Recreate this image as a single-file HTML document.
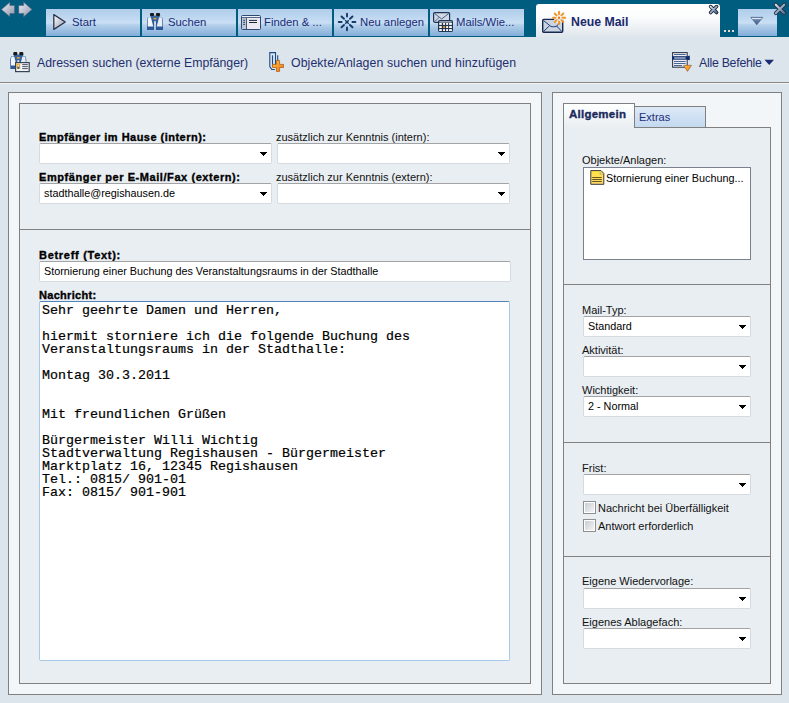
<!DOCTYPE html>
<html><head><meta charset="utf-8">
<style>
*{margin:0;padding:0;box-sizing:border-box}
html,body{width:789px;height:703px;overflow:hidden;background:#dce5ec;font-family:"Liberation Sans",sans-serif;position:relative}
.a{position:absolute}
.t{position:absolute;white-space:nowrap;line-height:13px}
#hdr{left:0;top:0;width:789px;height:37px;background:#005d80}
.tab{position:absolute;top:9px;height:27px;width:94px;background:linear-gradient(#b0cdea 0,#c9dff4 52%,#b6d1eb 58%,#82add9 100%)}
.tab .t{font-size:11.3px;color:#1c2a78;top:6.7px}
.tool{font-size:12.3px;color:#1f2f6e}
.box{position:absolute;border:1px solid #808080}
.lbl{font-size:11px;color:#111}
.blbl{font-size:11px;font-weight:bold;color:#000;letter-spacing:0.4px;-webkit-text-stroke-width:0.35px}
.fld{position:absolute;height:21px;background:#fff;border:1px solid #d6dbe1;border-top:1px solid #a3a3a3;border-radius:2px}
.arr{position:absolute;width:7px;height:4px}.arr i{display:block;height:1px;background:#000;margin:0 auto;width:7px}.arr i+i{width:5px}.arr i+i+i{width:3px}.arr i+i+i+i{width:1px}
.ftxt{font-size:10.8px;color:#000}
.mono{font-family:"Liberation Mono",monospace;font-size:13.33px;line-height:13px;color:#000;white-space:pre;-webkit-text-stroke-width:0.2px}
</style></head><body>
<!-- header -->
<div id="hdr" class="a"></div>

<!-- tabs -->
<div class="tab" style="left:46px"><div class="t" style="left:26px">Start</div></div>
<div class="tab" style="left:142px"><div class="t" style="left:26px">Suchen</div></div>
<div class="tab" style="left:238px"><div class="t" style="left:26px">Finden &amp; ...</div></div>
<div class="tab" style="left:334px"><div class="t" style="left:26px">Neu anlegen</div></div>
<div class="tab" style="left:430px"><div class="t" style="left:26px">Mails/Wie...</div></div>

<!-- active tab -->
<div class="a" style="left:536px;top:4px;width:184px;height:33px;background:linear-gradient(#ffffff 0,#fbfcfd 40%,#dfe6ec 100%);border-radius:3px 3px 0 0"></div>
<div class="t" style="left:571px;top:16.2px;font-size:12.3px;font-weight:bold;color:#1a2a6c">Neue Mail</div>

<!-- dropdown btn -->
<div class="a" style="left:738px;top:9px;width:39px;height:27px;background:linear-gradient(#b0cdea 0,#c9dff4 52%,#b6d1eb 58%,#82add9 100%)"></div>

<!-- toolbar -->
<div class="t tool" style="left:37px;top:57.2px">Adressen suchen (externe Empfänger)</div>
<div class="t tool" style="left:291px;top:57.2px;letter-spacing:0.1px">Objekte/Anlagen suchen und hinzufügen</div>
<div class="t tool" style="left:699px;top:57.2px;letter-spacing:-0.25px">Alle Befehle</div>
<div class="a" style="left:0;top:82px;width:789px;height:1px;background:#888"></div>
<div class="a" style="left:0;top:83px;width:789px;height:1px;background:#f0f4f7"></div>

<!-- left panel -->
<div class="box" style="left:8px;top:92px;width:534px;height:603px;background:#f2f6f9"></div>
<div class="box" style="left:19px;top:103px;width:512px;height:581px;background:#e9eef2"></div>
<div class="a" style="left:19px;top:229px;width:512px;height:1px;background:#808080"></div>

<!-- right panel -->
<div class="box" style="left:552px;top:92px;width:230px;height:603px;background:#f2f6f9"></div>
<div class="box" style="left:563px;top:127px;width:208px;height:557px;background:#e9eef2"></div>
<div class="a" style="left:563px;top:284px;width:208px;height:1px;background:#808080"></div>
<div class="a" style="left:563px;top:442px;width:208px;height:1px;background:#808080"></div>
<div class="a" style="left:563px;top:556px;width:208px;height:1px;background:#808080"></div>


<!-- left form -->
<div class="t blbl" style="left:39px;top:130.7px;letter-spacing:0.48px">Empfänger im Hause (intern):</div>
<div class="t lbl" style="left:276px;top:130.7px">zusätzlich zur Kenntnis (intern):</div>
<div class="fld" style="left:39px;top:143px;width:233px"></div>
<div class="arr" style="left:260px;top:152px"><i></i><i></i><i></i><i></i></div>
<div class="fld" style="left:277px;top:143px;width:233px"></div>
<div class="arr" style="left:498px;top:152px"><i></i><i></i><i></i><i></i></div>
<div class="t blbl" style="left:39px;top:170.7px;letter-spacing:0.57px">Empfänger per E-Mail/Fax (extern):</div>
<div class="t lbl" style="left:276px;top:170.7px">zusätzlich zur Kenntnis (extern):</div>
<div class="fld" style="left:39px;top:183px;width:233px"></div>
<div class="arr" style="left:260px;top:192px"><i></i><i></i><i></i><i></i></div>
<div class="t ftxt" style="left:44px;top:186.8px">stadthalle@regishausen.de</div>
<div class="fld" style="left:277px;top:183px;width:233px"></div>
<div class="arr" style="left:498px;top:192px"><i></i><i></i><i></i><i></i></div>

<div class="t blbl" style="left:39px;top:248.7px;letter-spacing:0.71px">Betreff (Text):</div>
<div class="fld" style="left:39px;top:261px;width:472px"></div>
<div class="t ftxt" style="left:44px;top:264.8px">Stornierung einer Buchung des Veranstaltungsraums in der Stadthalle</div>
<div class="t blbl" style="left:39px;top:288.7px;letter-spacing:0.3px">Nachricht:</div>
<div class="a" style="left:39px;top:301px;width:471px;height:360px;background:#fff;border:1px solid #a9c9ea;border-top:1px solid #4f84bd;border-radius:2px"></div>
<div class="a mono" style="left:42px;top:304.3px">Sehr geehrte Damen und Herren,

hiermit storniere ich die folgende Buchung des
Veranstaltungsraums in der Stadthalle:

Montag 30.3.2011


Mit freundlichen Grüßen

Bürgermeister Willi Wichtig
Stadtverwaltung Regishausen - Bürgermeister
Marktplatz 16, 12345 Regishausen
Tel.: 0815/ 901-01
Fax: 0815/ 901-901</div>

<!-- right tabs -->
<div class="a" style="left:634px;top:106px;width:72px;height:22px;border:1px solid #808080;background:linear-gradient(#dde9f6,#c3d9f0)"></div>
<div class="t lbl" style="left:639px;top:110.7px;color:#1d2e78">Extras</div>
<div class="a" style="left:563px;top:103px;width:72px;height:25px;border:1px solid #808080;border-bottom:none;background:linear-gradient(#fff,#e9eef2)"></div>
<div class="t blbl" style="left:569px;top:108px;font-size:11.5px;color:#1b2a5e;letter-spacing:0.25px">Allgemein</div>

<div class="t lbl" style="left:582px;top:153.7px">Objekte/Anlagen:</div>
<div class="a" style="left:583px;top:167px;width:168px;height:93px;background:#fff;border:1px solid #7a808c"></div>
<div class="t ftxt" style="left:606px;top:171.5px">Stornierung einer Buchung...</div>

<div class="t lbl" style="left:582px;top:303.7px">Mail-Typ:</div>
<div class="fld" style="left:583px;top:316px;width:168px"></div>
<div class="arr" style="left:739px;top:325px"><i></i><i></i><i></i><i></i></div>
<div class="t ftxt" style="left:588px;top:319.8px">Standard</div>
<div class="t lbl" style="left:582px;top:344.2px">Aktivität:</div>
<div class="fld" style="left:583px;top:356px;width:168px"></div>
<div class="arr" style="left:739px;top:365px"><i></i><i></i><i></i><i></i></div>
<div class="t lbl" style="left:582px;top:383.7px">Wichtigkeit:</div>
<div class="fld" style="left:583px;top:396px;width:168px"></div>
<div class="arr" style="left:739px;top:405px"><i></i><i></i><i></i><i></i></div>
<div class="t ftxt" style="left:588px;top:399.5px">2 - Normal</div>

<div class="t lbl" style="left:582px;top:462.3px">Frist:</div>
<div class="fld" style="left:583px;top:474px;width:168px"></div>
<div class="arr" style="left:739px;top:483px"><i></i><i></i><i></i><i></i></div>
<div class="a" style="left:583px;top:501px;width:13px;height:13px;border:1px solid #8e8f90;box-shadow:inset 0 0 0 1px #fff;background:linear-gradient(135deg,#c4c8d0,#f8f8f8)"></div>
<div class="t lbl" style="left:598px;top:501.7px">Nachricht bei Überfälligkeit</div>
<div class="a" style="left:583px;top:519px;width:13px;height:13px;border:1px solid #8e8f90;box-shadow:inset 0 0 0 1px #fff;background:linear-gradient(135deg,#c4c8d0,#f8f8f8)"></div>
<div class="t lbl" style="left:598px;top:519.7px">Antwort erforderlich</div>

<div class="t lbl" style="left:582px;top:575.4px">Eigene Wiedervorlage:</div>
<div class="fld" style="left:583px;top:588px;width:168px"></div>
<div class="arr" style="left:739px;top:597px"><i></i><i></i><i></i><i></i></div>
<div class="t lbl" style="left:582px;top:615.5px">Eigenes Ablagefach:</div>
<div class="fld" style="left:583px;top:628px;width:168px"></div>
<div class="arr" style="left:739px;top:637px"><i></i><i></i><i></i><i></i></div>


<svg class="a" style="left:0;top:0" width="789" height="703" viewBox="0 0 789 703">
<defs>
<linearGradient id="gArr" x1="0" y1="0" x2="1" y2="1"><stop offset="0" stop-color="#eeeef4"/><stop offset="1" stop-color="#8a93ab"/></linearGradient>
<linearGradient id="gPlay" x1="0" y1="0" x2="1" y2="1"><stop offset="0" stop-color="#ffffff"/><stop offset="1" stop-color="#9099ae"/></linearGradient>
<linearGradient id="gX" gradientUnits="userSpaceOnUse" x1="710" y1="6" x2="717" y2="13"><stop offset="0" stop-color="#f0f4fa"/><stop offset="1" stop-color="#3f6394"/></linearGradient>
<linearGradient id="gX2" gradientUnits="userSpaceOnUse" x1="775" y1="4" x2="785" y2="14"><stop offset="0" stop-color="#e6ecf4"/><stop offset="1" stop-color="#4a6a98"/></linearGradient>
<linearGradient id="gOr" x1="0" y1="0" x2="1" y2="1"><stop offset="0" stop-color="#ffc040"/><stop offset="1" stop-color="#f07818"/></linearGradient>
<linearGradient id="gTri" x1="0" y1="0" x2="0" y2="1"><stop offset="0" stop-color="#7f98bb"/><stop offset="1" stop-color="#3c5a85"/></linearGradient>
<linearGradient id="gDoc" x1="0" y1="0" x2="0" y2="1"><stop offset="0" stop-color="#ffe440"/><stop offset="1" stop-color="#ffd870"/></linearGradient>
<linearGradient id="gBar" x1="0" y1="0" x2="0" y2="1"><stop offset="0" stop-color="#2a5da0"/><stop offset="0.5" stop-color="#e6eef6"/><stop offset="1" stop-color="#1c4d90"/></linearGradient>
</defs>
<!-- nav arrows -->
<polygon points="1.5,9.5 9.8,2.3 9.8,5.5 14.5,5.5 14.5,13.5 9.8,13.5 9.8,16.7" fill="url(#gArr)" stroke="#5d6578" stroke-width="0.6"/>
<polygon points="32,9.5 23.7,2.3 23.7,5.5 18.8,5.5 18.8,13.5 23.7,13.5 23.7,16.7" fill="url(#gArr)" stroke="#5d6578" stroke-width="0.6"/>
<!-- play -->
<polygon points="53.8,14.6 65.3,22 53.8,29.4" fill="url(#gPlay)" stroke="#2b3448" stroke-width="1.3" stroke-linejoin="round"/>
<!-- binoculars tab -->
<g>
<path d="M148,17.2 L154,16.5 L154,30 L147,30 L147,20 Z" fill="#2d5a96"/>
<path d="M156,16.5 L162,17.2 L163,20 L163,30 L156,30 Z" fill="#2d5a96"/>
<path d="M150,15.5 L160.5,15.5 L157,21.2 L153,21.2 Z" fill="#3565a0"/>
<path d="M148.4,17.3 L150.9,17.3 L153.3,26.4 L147.7,26.4 L147.7,19.5 Z" fill="#f2f5f9"/>
<path d="M159.1,17.3 L161.6,17.3 L162.3,19.5 L162.3,26.4 L156.7,26.4 Z" fill="#e8edf4"/>
<rect x="150" y="12.9" width="4" height="3.2" rx="1" fill="#181818"/>
<rect x="156" y="12.9" width="4" height="3.2" rx="1" fill="#181818"/>
<ellipse cx="155" cy="18.6" rx="1.7" ry="0.85" fill="#f0a020"/>
</g>
<!-- finden window -->
<rect x="241.5" y="15.5" width="19" height="14" rx="1" fill="#dde0ea" stroke="#2e4a72" stroke-width="1"/>
<rect x="242" y="16" width="18" height="1.2" fill="#eef2f6"/>
<rect x="241.5" y="17.2" width="19" height="0.9" fill="#2e4a72"/>
<rect x="242" y="18" width="4" height="11" fill="#bcc7d4"/>
<rect x="246" y="18" width="0.9" height="11.5" fill="#2e4a72"/>
<rect x="247" y="18" width="13" height="11" fill="#eceaf0"/>
<rect x="243.3" y="19.7" width="1.6" height="1" fill="#1e2a3a"/>
<rect x="243.3" y="21.8" width="1.6" height="1" fill="#1e2a3a"/>
<rect x="243.3" y="23.9" width="1.6" height="1" fill="#1e2a3a"/>
<rect x="249" y="19.9" width="8" height="1" fill="#1e2a3a"/>
<rect x="249" y="22" width="8" height="1" fill="#1e2a3a"/>
<!-- neu anlegen sparkle -->
<g stroke="#143a6c" stroke-width="1.9" stroke-linecap="round">
<line x1="347" y1="13.8" x2="347" y2="16.5"/>
<line x1="347" y1="27.5" x2="347" y2="30.3"/>
<line x1="338.7" y1="22" x2="341.6" y2="22"/>
<line x1="352.4" y1="22" x2="355.4" y2="22"/>
<line x1="341.5" y1="16.5" x2="344" y2="18.8"/>
<line x1="352.5" y1="16.5" x2="350" y2="18.8"/>
<line x1="341.5" y1="27.3" x2="344" y2="25"/>
<line x1="352.5" y1="27.3" x2="350" y2="25"/>
</g>
<g stroke="#143a6c" stroke-width="1.4"><line x1="345.2" y1="20.2" x2="348.8" y2="23.8"/><line x1="348.8" y1="20.2" x2="345.2" y2="23.8"/></g>
<!-- mails/wie icon -->
<rect x="433.6" y="12.6" width="16" height="9.7" rx="1.2" fill="#d4d8e2" stroke="#1f3556" stroke-width="1.2"/>
<polyline points="434.5,13.5 441.6,19 448.8,13.5" fill="none" stroke="#2f5688" stroke-width="0.9"/>
<line x1="434.5" y1="21.5" x2="439" y2="17.6" stroke="#2f5688" stroke-width="0.8"/>
<rect x="438.5" y="20.5" width="14" height="11" rx="0.8" fill="#25344c" stroke="#1f3556" stroke-width="1"/>
<rect x="439.3" y="21.3" width="12.4" height="1.2" fill="#c9d2de"/>
<g fill="#ffffff">
<rect x="439.2" y="23" width="2.6" height="1.9"/><rect x="443.1" y="23" width="1.9" height="1.9"/><rect x="446.1" y="23" width="2" height="1.9"/><rect x="449.1" y="23" width="2.8" height="1.9"/>
<rect x="439.2" y="26.1" width="2.6" height="1.9"/><rect x="446.1" y="26.1" width="2" height="1.9"/><rect x="449.1" y="26.1" width="2.8" height="1.9"/>
<rect x="439.2" y="29.1" width="2.6" height="1.9"/><rect x="443.1" y="29.1" width="1.9" height="1.9"/><rect x="446.1" y="29.1" width="2" height="1.9"/><rect x="449.1" y="29.1" width="2.8" height="1.9"/>
</g>
<rect x="443.1" y="26.1" width="1.9" height="1.9" fill="#f59a1e"/>
<!-- neue mail icon -->
<rect x="542.7" y="19.4" width="20" height="12.8" rx="1" fill="#ccd3e0" stroke="#15294c" stroke-width="1.4"/>
<polyline points="543.5,20.5 551,26.5 553.5,26.8 556,26.5 561.8,21.2" fill="none" stroke="#1f4078" stroke-width="1"/>
<line x1="543.5" y1="31.5" x2="549.5" y2="25.8" stroke="#1f4078" stroke-width="1"/>
<line x1="561.8" y1="31.5" x2="556.5" y2="25.8" stroke="#1f4078" stroke-width="1"/>
<circle cx="559" cy="17.8" r="5.2" fill="#f3f6f9" opacity="0.9"/>
<g stroke="#f39320" stroke-width="1.9" stroke-linecap="round">
<line x1="559" y1="11.6" x2="559" y2="14.2"/>
<line x1="559" y1="21.4" x2="559" y2="24"/>
<line x1="553" y1="17.8" x2="555.5" y2="17.8"/>
<line x1="562.5" y1="17.8" x2="565.2" y2="17.8"/>
<line x1="554.7" y1="13.5" x2="556.6" y2="15.4"/>
<line x1="563.3" y1="13.5" x2="561.4" y2="15.4"/>
<line x1="554.7" y1="22.1" x2="556.6" y2="20.2"/>
<line x1="563.3" y1="22.1" x2="561.4" y2="20.2"/>
</g>
<circle cx="559" cy="17.8" r="1.2" fill="#f07a10"/>
<!-- tab close x -->
<g stroke-linecap="round"><path d="M710.6,6.6 L716.6,12.6 M716.6,6.6 L710.6,12.6" stroke="#1d2636" stroke-width="3.6" fill="none"/>
<path d="M710.6,6.6 L716.6,12.6 M716.6,6.6 L710.6,12.6" stroke="url(#gX)" stroke-width="1.8" fill="none"/></g>
<!-- dots -->
<rect x="724" y="30" width="2" height="2" fill="#eed8c8"/>
<rect x="728" y="30" width="2" height="2" fill="#eed8c8"/>
<rect x="732" y="30" width="2" height="2" fill="#eed8c8"/>
<!-- dropdown triangle -->
<polygon points="750.8,17.3 762.8,17.3 756.8,24.8" fill="url(#gTri)" stroke="#3b5478" stroke-width="0.6"/>
<rect x="752" y="18" width="9.5" height="1.1" fill="#dfe8f2"/>
<!-- window close X -->
<g stroke-linecap="round"><path d="M775.8,4.8 L784.2,13.2 M784.2,4.8 L775.8,13.2" stroke="#2a3240" stroke-width="3.8" fill="none"/>
<path d="M775.8,4.8 L784.2,13.2 M784.2,4.8 L775.8,13.2" stroke="url(#gX2)" stroke-width="2" fill="none"/></g>

<!-- toolbar: binoculars + card -->
<g>
<g transform="translate(-136.7,39.1)">
<path d="M148,17.2 L154,16.5 L154,30 L147,30 L147,20 Z" fill="#2d5a96"/>
<path d="M156,16.5 L162,17.2 L163,20 L163,30 L156,30 Z" fill="#2d5a96"/>
<path d="M150,15.5 L160.5,15.5 L157,21.2 L153,21.2 Z" fill="#3565a0"/>
<path d="M148.4,17.3 L150.9,17.3 L153.3,26.4 L147.7,26.4 L147.7,19.5 Z" fill="#f2f5f9"/>
<path d="M159.1,17.3 L161.6,17.3 L162.3,19.5 L162.3,26.4 L156.7,26.4 Z" fill="#e8edf4"/>
<rect x="150" y="12.9" width="4" height="3.2" rx="1" fill="#181818"/>
<rect x="156" y="12.9" width="4" height="3.2" rx="1" fill="#181818"/>
<rect x="153.5" y="18" width="3" height="1.5" fill="#f0a030"/>
</g>
<rect x="15.6" y="62.6" width="13.6" height="9" fill="#f2f4f8" stroke="#3a4352" stroke-width="1.2"/>
<rect x="16.4" y="63.6" width="3.8" height="5.2" fill="#f0a830"/>
<rect x="17.5" y="65.5" width="1.8" height="3.3" fill="#2a5a90"/>
<circle cx="18.4" cy="65.8" r="0.9" fill="#ffffff"/>
<rect x="22.2" y="64.2" width="5.6" height="0.9" fill="#3a4352"/>
<rect x="22.2" y="66.2" width="5.6" height="0.9" fill="#3a4352"/>
<rect x="22.2" y="68.2" width="5.6" height="0.9" fill="#3a4352"/>
</g>
<!-- toolbar: paperclip + plus -->
<g fill="none" stroke="#1d4a8a" stroke-width="1.1">
<path d="M277.7,55.3 L277.7,62"/>
<path d="M272.5,55.3 L272.5,66"/>
<path d="M275.5,67 L275.5,52.6 L269.8,52.6 L269.8,66.5 L271.8,69.5 L274.8,69.5"/>
</g>
<path d="M276.4,60.4 L279.6,60.4 L279.6,64.4 L283.5,64.4 L283.5,67.5 L279.6,67.5 L279.6,71.4 L276.4,71.4 L276.4,67.5 L272.5,67.5 L272.5,64.4 L276.4,64.4 Z" fill="url(#gOr)" stroke="#b0601a" stroke-width="0.8"/>
<!-- toolbar: alle befehle list -->
<rect x="672.6" y="52.6" width="14.6" height="14.6" fill="#f2eef4" stroke="#343c4a" stroke-width="1.1"/>
<rect x="674" y="54.1" width="11.6" height="0.9" fill="#2f5a8f"/>
<rect x="672" y="56.2" width="16" height="3.5" fill="#0c2c6c"/>
<polygon points="687.5,56.2 689.8,55.6 689.8,60.3 687.5,59.7" fill="#0c2c6c"/>
<rect x="674.2" y="57.5" width="11.4" height="1" fill="#f4f0f6"/>
<rect x="674" y="61" width="11.6" height="0.9" fill="#2f5a8f"/>
<rect x="674" y="63" width="11.6" height="0.9" fill="#2f5a8f"/>
<rect x="674" y="65" width="8" height="0.9" fill="#2f5a8f"/>
<polygon points="683.5,65.3 691.5,65.3 687.5,71.4" fill="url(#gOr)" stroke="#8a5a30" stroke-width="0.6"/>
<!-- alle befehle arrow -->
<polygon points="764.5,59.8 774,59.8 769.2,65" fill="#1b2d72"/>
<!-- doc icon -->
<path d="M590.8,170.6 L601,170.6 L603.8,173.4 L603.8,184.3 L590.8,184.3 Z" fill="url(#gDoc)" stroke="#3a3a3a" stroke-width="1" stroke-linejoin="round"/>
<path d="M599.6,171.2 L603.2,174.8 L599.6,174.8 Z" fill="#c8b878"/>
<rect x="592.2" y="177" width="9.6" height="1" fill="#6a5420"/>
<rect x="592.2" y="179" width="9.6" height="1" fill="#6a5420"/>
<rect x="592.2" y="181" width="9.6" height="1" fill="#6a5420"/>
</svg>

</body></html>
